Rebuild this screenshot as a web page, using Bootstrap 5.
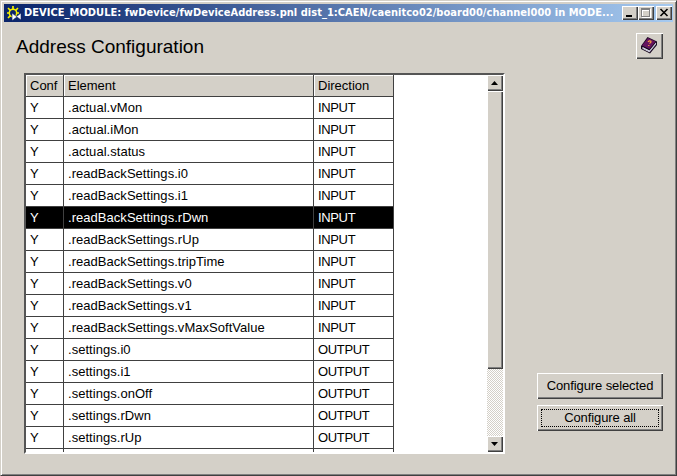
<!DOCTYPE html>
<html lang="en">
<head>
<meta charset="utf-8">
<title>DEVICE_MODULE: fwDevice/fwDeviceAddress.pnl</title>
<link href="https://cdn.jsdelivr.net/npm/bootstrap@5.3.0/dist/css/bootstrap.min.css" rel="stylesheet">
<style>
:root{--face:#d4d0c8;--line:#404040}
body{background:var(--face);font:13px/16px "Liberation Sans",Arial,sans-serif;color:#000}
.win{width:677px;height:476px;background:var(--face);border:1px solid var(--face);border-right-color:#404040;border-bottom-color:#404040;box-shadow:inset 1px 1px #fff,inset -1px -1px #808080;padding:3px}
.titlebar{height:18px;background:linear-gradient(90deg,#0a246a,#a6caf0);color:#fff;font:bold 11px/18px "DejaVu Sans Condensed","DejaVu Sans",sans-serif;padding:0 1px 0 2px}
.caption{width:592px;margin-left:2px;white-space:nowrap;letter-spacing:.03px}
.raised{background:var(--face);border:0;border-radius:0;box-shadow:inset 1px 1px #fff,inset -1px -1px #404040,inset -2px -2px #808080;color:#000;padding:0;line-height:1;flex-shrink:0}
.cap{width:16px;height:14px;display:block}
.cap-close{margin-left:2px}
.cap svg,.sb svg,.help svg{display:block}
.toprow{height:51px}
.heading{font-size:19px;line-height:24px;font-weight:400;margin:13px 0 0 12px}
.help{width:27px;height:26px;margin:11px 10px 0 0}
.listbox{width:481px;height:381px;margin-left:20px;border:2px solid #fff;border-top-color:#555;border-left-color:#555;background:#fff;overflow:hidden}
.grid-table{width:368px;table-layout:fixed;border-collapse:separate;border-spacing:0;margin:0}
.grid-table th,.grid-table td{height:22px;padding:1px 0 0 4px;border-right:1px solid var(--line);border-bottom:1px solid var(--line);font-weight:400;line-height:20px;white-space:nowrap}
.grid-table td:nth-child(2){letter-spacing:.04px}
.grid-table td:last-child{letter-spacing:-.35px}
.grid-table th{background:var(--face);box-shadow:inset 1px 1px #fff}
.grid-table .picked td{background:#000;color:#fff}
.sb{width:16px;height:377px;background:repeating-conic-gradient(#fff 0 25%,#d4d0c8 0 50%) 0 0/2px 2px}
.arrow{width:16px;height:16px}
.thumb{width:16px;height:278px}
.actions{width:126px;margin-right:10px;gap:6px;padding-bottom:23px}
.push{width:126px;height:26px;font-size:13px;letter-spacing:-.1px}
.push-face{height:18px;margin:0 4px;line-height:18px}
.focused .push-face{outline:1px dotted #000;outline-offset:-1px}
</style>
<script src="https://cdn.jsdelivr.net/npm/bootstrap@5.3.0/dist/js/bootstrap.bundle.min.js"></script>
</head>
<body class="overflow-hidden">
<div class="win">
  <div class="titlebar d-flex align-items-center">
    <svg width="16" height="16" viewBox="0 0 16 16">
      <g stroke="#f4f000" fill="none"><circle cx="7" cy="8" r="3.700" stroke-width="1.500"/><path d="M7 1v3M2 3l2.500 2.500M12 3L9.500 5.500M1 8h2.500M10.500 8H13M2 13l2.500-2.500M7 12v3" stroke-width="1.700"/></g>
      <path d="M6 8l4.500 3.500L15 8v7l-4-3-5 3.500z" fill="#fff" stroke="#0a246a" stroke-width=".6"/>
    </svg>
    <div class="caption">DEVICE_MODULE: fwDevice/fwDeviceAddress.pnl dist_1:CAEN/caenitco02/board00/channel000 in MODE...</div>
    <div class="d-flex ms-auto">
      <button class="raised cap" aria-label="Minimize"><svg width="16" height="14"><path d="M4 9h6v2H4z"/></svg></button>
      <button class="raised cap" aria-label="Maximize"><svg width="16" height="14" shape-rendering="crispEdges"><path d="M4 3h9v9H4zM5 5v6h7V5z" fill="#fff" fill-rule="evenodd"/><path d="M3 2h9v9H3zM4 4v6h7V4z" fill="#808080" fill-rule="evenodd"/></svg></button>
      <button class="raised cap cap-close" aria-label="Close"><svg width="16" height="14"><path d="M4.500 3l7 7M11.500 3l-7 7" stroke="#000" stroke-width="1.600"/></svg></button>
    </div>
  </div>
  <div class="toprow d-flex justify-content-between align-items-start">
    <h1 class="heading">Address Configuration</h1>
    <button class="raised help" aria-label="Help">
      <svg width="27" height="26" viewBox="0 0 27 26">
        <path d="M5 13l6.500-9 9.500 4.500V12l-7 8.500-9-4.500z" fill="#180820"/>
        <path d="M6 12.500L12 5l7.500 3.500-6 7.500z" fill="#65155f"/>
        <path d="M6.500 14l7 3.500 6.500-8v1.700l-6.500 8-7-3.500z" fill="#fff"/>
        <path d="M6.500 15l7 3.500 6.500-8" fill="none" stroke="#8080b0" stroke-width=".5"/>
        <path d="M12 9q1.500-2 3-.7.500 1.200-1.500 2.200M12.800 12v1" fill="none" stroke="#ffa040" stroke-width="1.200"/>
      </svg>
    </button>
  </div>
  <div class="d-flex justify-content-between">
    <div class="listbox d-flex justify-content-between">
      <table class="grid-table">
        <colgroup><col style="width:38px"><col style="width:250px"><col style="width:80px"></colgroup>
        <thead><tr><th>Conf</th><th>Element</th><th>Direction</th></tr></thead>
        <tbody>
          <tr><td>Y</td><td>.actual.vMon</td><td>INPUT</td></tr>
          <tr><td>Y</td><td>.actual.iMon</td><td>INPUT</td></tr>
          <tr><td>Y</td><td>.actual.status</td><td>INPUT</td></tr>
          <tr><td>Y</td><td>.readBackSettings.i0</td><td>INPUT</td></tr>
          <tr><td>Y</td><td>.readBackSettings.i1</td><td>INPUT</td></tr>
          <tr class="picked"><td>Y</td><td>.readBackSettings.rDwn</td><td>INPUT</td></tr>
          <tr><td>Y</td><td>.readBackSettings.rUp</td><td>INPUT</td></tr>
          <tr><td>Y</td><td>.readBackSettings.tripTime</td><td>INPUT</td></tr>
          <tr><td>Y</td><td>.readBackSettings.v0</td><td>INPUT</td></tr>
          <tr><td>Y</td><td>.readBackSettings.v1</td><td>INPUT</td></tr>
          <tr><td>Y</td><td>.readBackSettings.vMaxSoftValue</td><td>INPUT</td></tr>
          <tr><td>Y</td><td>.settings.i0</td><td>OUTPUT</td></tr>
          <tr><td>Y</td><td>.settings.i1</td><td>OUTPUT</td></tr>
          <tr><td>Y</td><td>.settings.onOff</td><td>OUTPUT</td></tr>
          <tr><td>Y</td><td>.settings.rDwn</td><td>OUTPUT</td></tr>
          <tr><td>Y</td><td>.settings.rUp</td><td>OUTPUT</td></tr>
          <tr><td></td><td></td><td></td></tr>
        </tbody>
      </table>
      <div class="sb d-flex flex-column">
        <button class="raised arrow" aria-label="Scroll up"><svg width="16" height="16"><path d="M4 10h7L7.500 6z"/></svg></button>
        <div class="raised thumb"></div>
        <button class="raised arrow mt-auto" aria-label="Scroll down"><svg width="16" height="16"><path d="M4 6h7L7.500 10z"/></svg></button>
      </div>
    </div>
    <div class="actions d-flex flex-column justify-content-end">
      <button class="raised push"><div class="push-face">Configure selected</div></button>
      <button class="raised push focused"><div class="push-face">Configure all</div></button>
    </div>
  </div>
</div>
</body>
</html>
